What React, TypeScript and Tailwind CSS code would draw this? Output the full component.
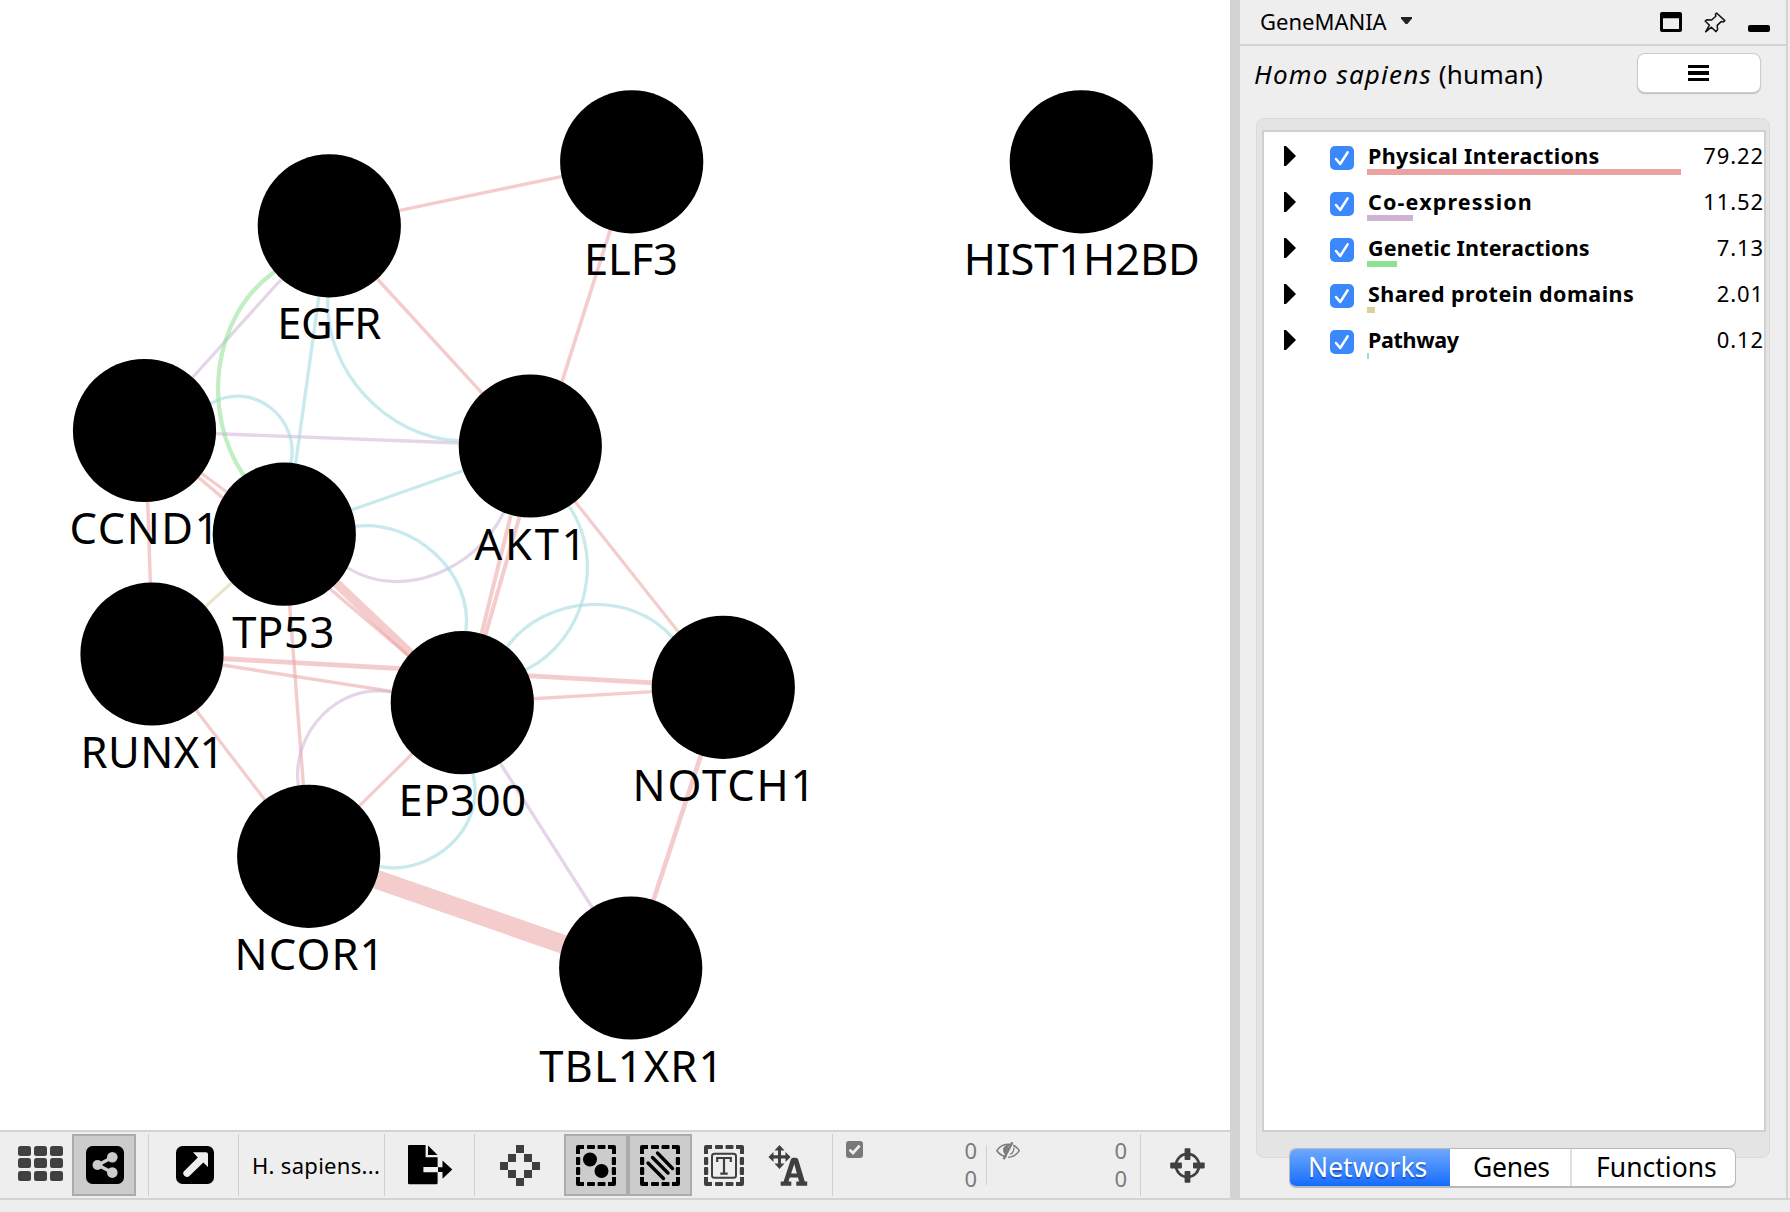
import type { ReactNode } from 'react';

type Pt = [number, number];
type Kind = 'physical' | 'coexp' | 'genetic' | 'domain' | 'pathway';

const EDGE: Record<Kind, string> = {
  physical: '#eba2a2',
  coexp: '#ceb3d5',
  genetic: '#8ee092',
  domain: '#dad19c',
  pathway: '#9dd9de',
};

const edges: { kind: Kind; w: number; pts: Pt[] }[] = [
  { kind: 'physical', w: 3.4, pts: [[400, 210.3], [560.7, 176.7]] },
  { kind: 'physical', w: 3.6, pts: [[610, 230.7], [562.3, 380.7]] },
  { kind: 'physical', w: 3.4, pts: [[378.3, 280], [481.3, 392.3]] },
  { kind: 'physical', w: 3.2, pts: [[576, 502.7], [677.7, 631]] },
  { kind: 'physical', w: 3.4, pts: [[147.7, 502.3], [150.3, 581.7]] },
  { kind: 'physical', w: 3.2, pts: [[202.3, 474], [225.7, 491.3]] },
  { kind: 'physical', w: 3.4, pts: [[199, 477.7], [408.5, 655.5]] },
  { kind: 'physical', w: 9.2, pts: [[338.5, 585.3], [409.5, 652.7]] },
  { kind: 'physical', w: 3.4, pts: [[289.7, 606], [303.3, 784]] },
  { kind: 'physical', w: 4.8, pts: [[224, 658.7], [651.7, 682.7]] },
  { kind: 'physical', w: 3.4, pts: [[224, 665.3], [391.7, 691.3]] },
  { kind: 'physical', w: 3.4, pts: [[534, 698.7], [651.7, 691.7]] },
  { kind: 'physical', w: 3.2, pts: [[196.7, 711], [265, 800]] },
  { kind: 'physical', w: 3.2, pts: [[411.7, 754.3], [360, 805.3]] },
  { kind: 'physical', w: 4.6, pts: [[700.7, 756], [653.7, 899.3]] },
  { kind: 'physical', w: 19, pts: [[378.3, 880], [563.3, 944.3]] },
  { kind: 'physical', w: 4, pts: [[510.3, 517.3], [481.7, 633.3]] },
  { kind: 'physical', w: 4, pts: [[519.3, 517.3], [485.7, 634]] },
  { kind: 'coexp', w: 3.2, pts: [[280, 280.7], [192.7, 377.3]] },
  { kind: 'coexp', w: 3.4, pts: [[216, 433.7], [458.3, 443]] },
  { kind: 'coexp', w: 3.4, pts: [[500.7, 764], [591.7, 906.7]] },
  { kind: 'coexp', w: 3.2, pts: [[347.7, 568], [373, 578], [403.3, 581.7], [446.7, 570], [476.7, 548], [503.3, 513.3]] },
  { kind: 'coexp', w: 3.2, pts: [[390.7, 692], [370, 692], [336.7, 702.7], [313.3, 725], [301.7, 751.7], [298.3, 785]] },
  { kind: 'genetic', w: 4.2, pts: [[273.3, 272.7], [246.7, 298.3], [225, 343.3], [218, 386.7], [223.3, 430], [243.3, 474.7]] },
  { kind: 'pathway', w: 3.4, pts: [[318.7, 297.7], [295.7, 463]] },
  { kind: 'pathway', w: 3.3, pts: [[327.7, 297.7], [331.7, 333.3], [346.7, 371.7], [380, 410], [410, 428.3], [440, 438.5], [459, 440.7]] },
  { kind: 'pathway', w: 3.3, pts: [[212.3, 402.7], [240, 397.5], [263.3, 401.5], [281.3, 417.3], [289.5, 440], [291, 463]] },
  { kind: 'pathway', w: 3.3, pts: [[462.3, 471], [352.3, 509.7]] },
  { kind: 'pathway', w: 3.4, pts: [[355.7, 526.3], [381, 526.7], [413.3, 538.3], [443.3, 562], [460, 589], [466.3, 613], [466, 631]] },
  { kind: 'pathway', w: 3.3, pts: [[570, 507.7], [583, 538.3], [587.7, 568.3], [581.7, 605], [562, 639.3], [526.7, 669.3]] },
  { kind: 'pathway', w: 3.3, pts: [[507.7, 646], [536.7, 620], [566.7, 608], [596.7, 604.7], [623.3, 607.3], [650, 619], [672.3, 637.3]] },
  { kind: 'pathway', w: 3.3, pts: [[473, 774], [470.7, 813.3], [453.3, 843.3], [425, 861], [400, 867], [380, 866.7]] },
  { kind: 'domain', w: 3.4, pts: [[231, 583.3], [206.7, 605.3]] },
];

/* One cubic segment from the first point to the last, fitted by least squares to those between. */
function curve(p: Pt[]): string {
  const a = p[0];
  const z = p[p.length - 1];
  if (p.length === 2) return `M${a[0]} ${a[1]}L${z[0]} ${z[1]}`;
  const len = [0];
  for (let i = 1; i < p.length; i++) len.push(len[i - 1] + Math.hypot(p[i][0] - p[i - 1][0], p[i][1] - p[i - 1][1]));
  let m11 = 0, m12 = 0, m22 = 0;
  const r1: Pt = [0, 0];
  const r2: Pt = [0, 0];
  p.forEach((q, i) => {
    const t = len[i] / len[len.length - 1];
    const u = 1 - t;
    const b1 = 3 * u * u * t;
    const b2 = 3 * u * t * t;
    m11 += b1 * b1;
    m12 += b1 * b2;
    m22 += b2 * b2;
    for (const k of [0, 1]) {
      const rest = q[k] - u * u * u * a[k] - t * t * t * z[k];
      r1[k] += b1 * rest;
      r2[k] += b2 * rest;
    }
  });
  const det = m11 * m22 - m12 * m12;
  const c1 = [0, 1].map((k) => ((m22 * r1[k] - m12 * r2[k]) / det).toFixed(2));
  const c2 = [0, 1].map((k) => ((m11 * r2[k] - m12 * r1[k]) / det).toFixed(2));
  return `M${a[0]} ${a[1]}C${c1.join(' ')} ${c2.join(' ')} ${z[0]} ${z[1]}`;
}

/* name, centre, label centre and label width */
const nodes: { name: string; x: number; y: number; lx: number; w: number }[] = [
  { name: 'CCND1', x: 144.5, y: 430.5, lx: 144.5, w: 150 },
  { name: 'EGFR', x: 329.3, y: 225.8, lx: 329.3, w: 104 },
  { name: 'ELF3', x: 631.7, y: 161.8, lx: 631, w: 94 },
  { name: 'HIST1H2BD', x: 1081.3, y: 161.8, lx: 1081.8, w: 236 },
  { name: 'AKT1', x: 530.3, y: 446, lx: 530.5, w: 112 },
  { name: 'RUNX1', x: 152, y: 654, lx: 152.5, w: 144 },
  { name: 'TP53', x: 284.3, y: 534.2, lx: 283.3, w: 102 },
  { name: 'NCOR1', x: 308.7, y: 856.3, lx: 309.5, w: 150 },
  { name: 'EP300', x: 462.3, y: 702.7, lx: 462.3, w: 127.5 },
  { name: 'NOTCH1', x: 723.3, y: 687.3, lx: 724, w: 183 },
  { name: 'TBL1XR1', x: 630.7, y: 968, lx: 631.3, w: 184 },
];

function Graph() {
  return (
    <svg width="1230" height="1130" viewBox="0 0 1230 1130" className="block">
      {edges.map((e, i) => (
        <path key={i} d={curve(e.pts)} fill="none" stroke={EDGE[e.kind]} strokeOpacity="0.55" strokeWidth={e.w} strokeLinecap="square" />
      ))}
      {nodes.map((n) => (
        <g key={n.name}>
          <circle cx={n.x} cy={n.y} r="71.6" fill="#000" />
          <text
            x={n.lx}
            y={n.y + 113.6}
            textAnchor="middle"
            textLength={n.w}
            lengthAdjust="spacing"
            fontSize="43.5"
            className="font-['Noto_Sans',sans-serif]"
          >
            {n.name}
          </text>
        </g>
      ))}
    </svg>
  );
}

function Sep({ className = '' }: { className?: string }) {
  return <div className={`h-[62px] w-px shrink-0 bg-[#cfcfcf] ${className}`} />;
}

function Pressed({ children, className = '' }: { children: ReactNode; className?: string }) {
  return (
    <div className={`flex h-[62px] w-16 shrink-0 items-center justify-center border-2 border-[#ababab] bg-[#cccccc] ${className}`}>
      {children}
    </div>
  );
}

/* Dashed selection frame, 40 x 41 */
function Dashed({ color, children }: { color: string; children: ReactNode }) {
  return (
    <svg width="40" height="41" viewBox="0 0 40 41" fill={color}>
      <path d="M2 0H8V4H4V9H0V2Q0 0 2 0ZM32 0H38Q40 0 40 2V9H36V4H32ZM0 32H4V37H8V41H2Q0 41 0 39ZM36 32H40V39Q40 41 38 41H32V37H36Z" />
      {[11, 21.5].map((x) => (
        <g key={x}>
          <rect x={x} y="0" width="8" height="4" rx="1" />
          <rect x={x} y="37" width="8" height="4" rx="1" />
        </g>
      ))}
      {[12, 22].map((y) => (
        <g key={y}>
          <rect x="0" y={y} width="4.2" height="8" rx="1" />
          <rect x="35.8" y={y} width="4.2" height="8" rx="1" />
        </g>
      ))}
      {children}
    </svg>
  );
}

function Counter({ icon, className = '' }: { icon: ReactNode; className?: string }) {
  return (
    <div className={`flex h-[62px] shrink-0 justify-between ${className}`}>
      {icon}
      <div className="flex flex-col text-right text-[22px] leading-[28px] text-[#7b7b7b]">
        <span className="mt-[2px]">0</span>
        <span>0</span>
      </div>
    </div>
  );
}

function Toolbar() {
  return (
    <div className="flex h-[68px] w-[1230px] shrink-0 items-center border-t-2 border-[#d3d3d3] bg-[#eeeeee]">
      <div className="ml-[18px] grid shrink-0 -translate-y-[2px] grid-cols-3 gap-x-[3px] gap-y-[2.5px]">
        {Array.from({ length: 9 }, (_, i) => (
          <div key={i} className="h-[10px] w-[13px] rounded-[2.5px] bg-[#404040]" />
        ))}
      </div>
      <Pressed className="ml-[9px]">
        <svg width="38" height="38" viewBox="0 0 38 38" className="ml-0.5">
          <rect width="38" height="38" rx="6.5" fill="#000" />
          <g fill="#ccc" stroke="#ccc">
            <path d="M26 11.5L12 19L26 26.5" fill="none" strokeWidth="3.4" />
            <circle cx="11.5" cy="19" r="5" stroke="none" />
            <circle cx="26.3" cy="11.3" r="5.3" stroke="none" />
            <circle cx="26.3" cy="26.6" r="5.3" stroke="none" />
          </g>
        </svg>
      </Pressed>
      <Sep className="ml-3" />
      <svg width="38" height="38" viewBox="0 0 38 38" className="ml-[27px] shrink-0">
        <rect width="38" height="38" rx="6.5" fill="#000" />
        <path d="M17 6.3H30Q32 6.3 32 8.3V21L27.3 16.6L13.4 30Q11 32 8.6 29.9Q6 27.5 8 25.3L21.8 11.4Z" fill="#eee" />
      </svg>
      <Sep className="ml-6" />
      <div className="ml-[13px] w-[132px] shrink-0 whitespace-nowrap text-[22px] leading-[30px] tracking-[0.3px]">H. sapiens...</div>
      <Sep />
      <svg width="45" height="40" viewBox="0 0 45 40" className="ml-[23px] shrink-0" fill="#000">
        <path d="M1 0H17.6V12.2H29.6V22H15.4V27.2H29.6V38Q29.6 39.3 28.4 39.3H1.2Q0 39.3 0 38V1Q0 0 1 0Z" />
        <path d="M20 0.4L29.6 10H20Z" />
        <path d="M30 22.2H34.5V15.5L44.3 24.6L34.5 33.8V27H30Z" />
      </svg>
      <Sep className="ml-[21px]" />
      <svg width="40" height="41" viewBox="0 0 40 41" className="ml-[25px] shrink-0" fill="#3f3f3f">
        {[[16, 0], [8, 9], [24, 9], [0, 17], [32, 17], [8, 25], [24, 25], [16, 33]].map(([x, y]) => (
          <rect key={`${x}-${y}`} x={x} y={y} width="8" height="8" />
        ))}
      </svg>
      <Pressed className="ml-6">
        <Dashed color="#000">
          <circle cx="14" cy="14.5" r="7" />
          <circle cx="25.5" cy="26" r="7" />
        </Dashed>
      </Pressed>
      <Pressed>
        <Dashed color="#000">
          <path d="M17.5 8L32.5 23.5M12.5 12.5L28 28M8 18L23.5 33.5" stroke="#000" strokeWidth="3.4" strokeLinecap="round" />
        </Dashed>
      </Pressed>
      <div className="ml-3 shrink-0">
        <Dashed color="#3f3f3f">
          <rect x="8" y="8.7" width="24" height="24" rx="2.5" fill="none" stroke="#3f3f3f" strokeWidth="2" />
          <path d="M13.2 17V13H26.8V17M20 13V28.5M16.3 28.6H23.7" fill="none" stroke="#3f3f3f" strokeWidth="2.2" />
        </Dashed>
      </div>
      <svg width="40" height="41" viewBox="0 0 40 41" className="ml-6 shrink-0" fill="#3f3f3f">
        <path d="M11.5 0L16.5 5.5H13V10.3H17.5V7L22.6 12L17.5 17V13.4H13V18.5H16.5L11.5 24L6.5 18.5H10V13.4H5.5V17L0.4 12L5.5 7V10.3H10V5.5H6.5Z" />
        <path d="M22.8 14.5Q23.3 12.8 25 12.8H28Q29.6 12.8 30.2 14.5L36.8 36.6H39.2V40.8H28.3V36.6H31.2L29.9 32.4H21.8L20.5 36.6H23.3V40.8H12.7V36.6H15.6ZM23.1 28.4H28.8L26.3 19Z" fillRule="evenodd" />
      </svg>
      <Sep className="ml-6" />
      <Counter
        className="ml-[13px] w-[131px]"
        icon={
          <svg width="17" height="17" viewBox="0 0 17 17" className="mt-[7px]">
            <rect width="17" height="17" rx="3" fill="#797979" />
            <path d="M3.5 8.6L7 12L13.6 4.6" fill="none" stroke="#eee" strokeWidth="2.7" />
          </svg>
        }
      />
      <div className="ml-[9px] h-10 w-px shrink-0 bg-[#cfcfcf]" />
      <Counter
        className="ml-[9px] w-[131px]"
        icon={
          <svg width="24" height="18" viewBox="0 0 24 18" className="mt-[8px]" fill="none" stroke="#7b7b7b">
            <path d="M10.5 14.8C6 14 2.5 11 0.9 8.7C3 5.3 7 2.3 12 2.3H14.2M17 3.2C20 4.3 22 6.4 23.2 8.7C21 12.3 16.5 15 12.2 15.3" strokeWidth="1.5" />
            <path d="M16.4 0.3L7.6 17.2" strokeWidth="2.4" />
            <path d="M13.4 2.8C10 2.4 7 4.8 7 8C7 10.5 8.4 12 9.8 12.6Z" fill="#7b7b7b" stroke="none" />
            <path d="M18 5.4C18 8.3 17 10.7 14.3 12.4" strokeWidth="1.3" />
          </svg>
        }
      />
      <Sep className="ml-[13px]" />
      <svg width="36" height="36" viewBox="0 0 36 36" className="ml-[29px] shrink-0 translate-y-px" fill="#3f3f3f">
        <circle cx="17.5" cy="17.5" r="11.6" fill="none" stroke="#3f3f3f" strokeWidth="2.6" />
        <rect x="14.6" y="0.3" width="5.8" height="11.7" rx="0.8" />
        <rect x="14.6" y="23" width="5.8" height="11.7" rx="0.8" />
        <rect x="0.2" y="14.6" width="11.7" height="5.8" rx="0.8" />
        <rect x="23" y="14.6" width="11.7" height="5.8" rx="0.8" />
      </svg>
    </div>
  );
}

const groups: { label: string; value: string; bar: string; ls: string }[] = [
  { label: 'Physical Interactions', value: '79.22', bar: 'w-[314px] bg-[#eba2a2]', ls: 'tracking-[0.35px]' },
  { label: 'Co-expression', value: '11.52', bar: 'w-[46px] bg-[#ceb3d5]', ls: 'tracking-[1.15px]' },
  { label: 'Genetic Interactions', value: '7.13', bar: 'w-[30px] bg-[#8ee092]', ls: 'tracking-[0.12px]' },
  { label: 'Shared protein domains', value: '2.01', bar: 'w-[8px] bg-[#dad19c]', ls: 'tracking-[0.45px]' },
  { label: 'Pathway', value: '0.12', bar: 'w-[2px] bg-[#9dd9de]', ls: 'tracking-[-0.35px]' },
];

function NetworkRow({ g }: { g: (typeof groups)[number] }) {
  return (
    <div className="flex h-[46px] items-start">
      <svg width="12" height="20" viewBox="0 0 12 20" className="ml-5 mt-[11px] shrink-0">
        <path d="M0 0H2L12 10L2 20H0Z" fill="#000" />
      </svg>
      <div className="ml-[34px] mt-[11px] h-6 w-6 shrink-0 rounded-[5px] bg-[#3b88fd]">
        <svg width="24" height="24" viewBox="0 0 24 24">
          <path d="M6 13L10.2 18L17.6 6.4" fill="none" stroke="#fff" strokeWidth="2.5" strokeLinecap="round" strokeLinejoin="round" />
        </svg>
      </div>
      <div className="ml-[13px] flex grow flex-col">
        <div className={`ml-px mt-[7px] h-[27px] whitespace-nowrap text-[21.5px] font-bold leading-[27px] ${g.ls}`}>{g.label}</div>
        <div className={`h-[6px] ${g.bar}`} />
      </div>
      <div className="mt-[7px] text-[22px] leading-[27px] tracking-[0.9px]">{g.value}</div>
    </div>
  );
}

function Panel() {
  return (
    <div className="flex h-[1198px] w-[548px] shrink-0 flex-col border-r-2 border-[#d3d3d3] bg-[#eeeeee]">
      <div className="flex h-[46px] shrink-0 items-center border-b-2 border-[#d3d3d3]">
        <div className="-mt-[2px] ml-5 w-[141px] text-[22px] leading-[30px]">GeneMANIA</div>
        <svg width="11" height="7" viewBox="0 0 11 7" className="-mt-[3px]">
          <path d="M0 0H11V1.6L6.4 7H4.6L0 1.6Z" fill="#222" />
        </svg>
        <svg width="22" height="20" viewBox="0 0 22 20" className="ml-[248px]">
          <path d="M2 0H20Q22 0 22 2V18Q22 20 20 20H2Q0 20 0 18V2Q0 0 2 0ZM3 6.3V17H19V6.3Z" fillRule="evenodd" />
        </svg>
        <svg width="22" height="21" viewBox="0 0 22 21" className="ml-[22px]" fill="none" stroke="#111" strokeWidth="1.5" strokeLinejoin="round">
          <path d="M12.6 1L20.8 8.6L19.3 10L17.2 9.6L13.2 13.4L13.6 17.6L12 19.6L7.4 15.2L1.6 19.8L5.4 13.2L1.2 9L3 7.7L7.6 8L11.8 4.2L11.4 2.2Z" />
        </svg>
        <div className="ml-[22px] mt-[13px] h-[6.5px] w-[22px] rounded-[2px] bg-black" />
      </div>
      <div className="flex h-[72px] shrink-0 items-start">
        <div className="ml-[14px] mt-[8px] w-[384px] whitespace-nowrap text-[26px] leading-[40px]">
          <span className="italic tracking-[1.2px]">Homo sapiens</span>
          <span className="tracking-[0.2px]"> (human)</span>
        </div>
        <button className="mt-[8px] flex h-[38px] w-[122px] flex-col items-center justify-center gap-[3.2px] rounded-[7px] bg-white pr-[2px] shadow-[0_0_0_1px_#cdcdcd,0_1.5px_1px_0.5px_#bdbdbd]">
          <span className="h-[3.5px] w-[21px] bg-black" />
          <span className="h-[3.5px] w-[21px] bg-black" />
          <span className="h-[3.5px] w-[21px] bg-black" />
        </button>
      </div>
      <div className="ml-4 h-[1040px] w-[514px] shrink-0 rounded-[8px] border border-[#dadada] bg-[#e4e4e4] pl-[5px] pt-[11px]">
        <div className="h-[1002px] w-[504px] border-2 border-[#d0d0d0] bg-white pt-[3px]">
          {groups.map((g) => (
            <NetworkRow key={g.label} g={g} />
          ))}
        </div>
      </div>
      <div className="relative -mt-[10px] ml-[49px] flex h-[40px] w-[447px] shrink-0 overflow-hidden rounded-[7px] border border-b-2 border-[#b9b9b9] bg-white text-[26.5px] leading-[37px]">
        <div className="-m-px -mb-[2px] w-[161px] shrink-0 bg-gradient-to-b from-[#6ea9fb] to-[#0568fe] pl-[19px] pt-px text-white [text-shadow:0_2px_1px_rgba(0,40,120,.45)]">
          Networks
        </div>
        <div className="ml-px w-[122px] shrink-0 border-r-2 border-[#dfdfdf] pl-[23px] tracking-[-0.3px]">Genes</div>
        <div className="pl-[24px]">Functions</div>
      </div>
    </div>
  );
}

export default function App() {
  return (
    <div className="flex h-[1212px] w-[1790px] flex-col overflow-hidden bg-[#eeeeee] font-['Noto_Sans',sans-serif] text-black">
      <div className="flex h-[1200px] shrink-0 border-b-2 border-[#d3d3d3]">
        <div className="flex w-[1230px] shrink-0 flex-col bg-white">
          <Graph />
          <Toolbar />
        </div>
        <div className="w-[10px] shrink-0 bg-[#d3d3d3]" />
        <Panel />
      </div>
    </div>
  );
}
